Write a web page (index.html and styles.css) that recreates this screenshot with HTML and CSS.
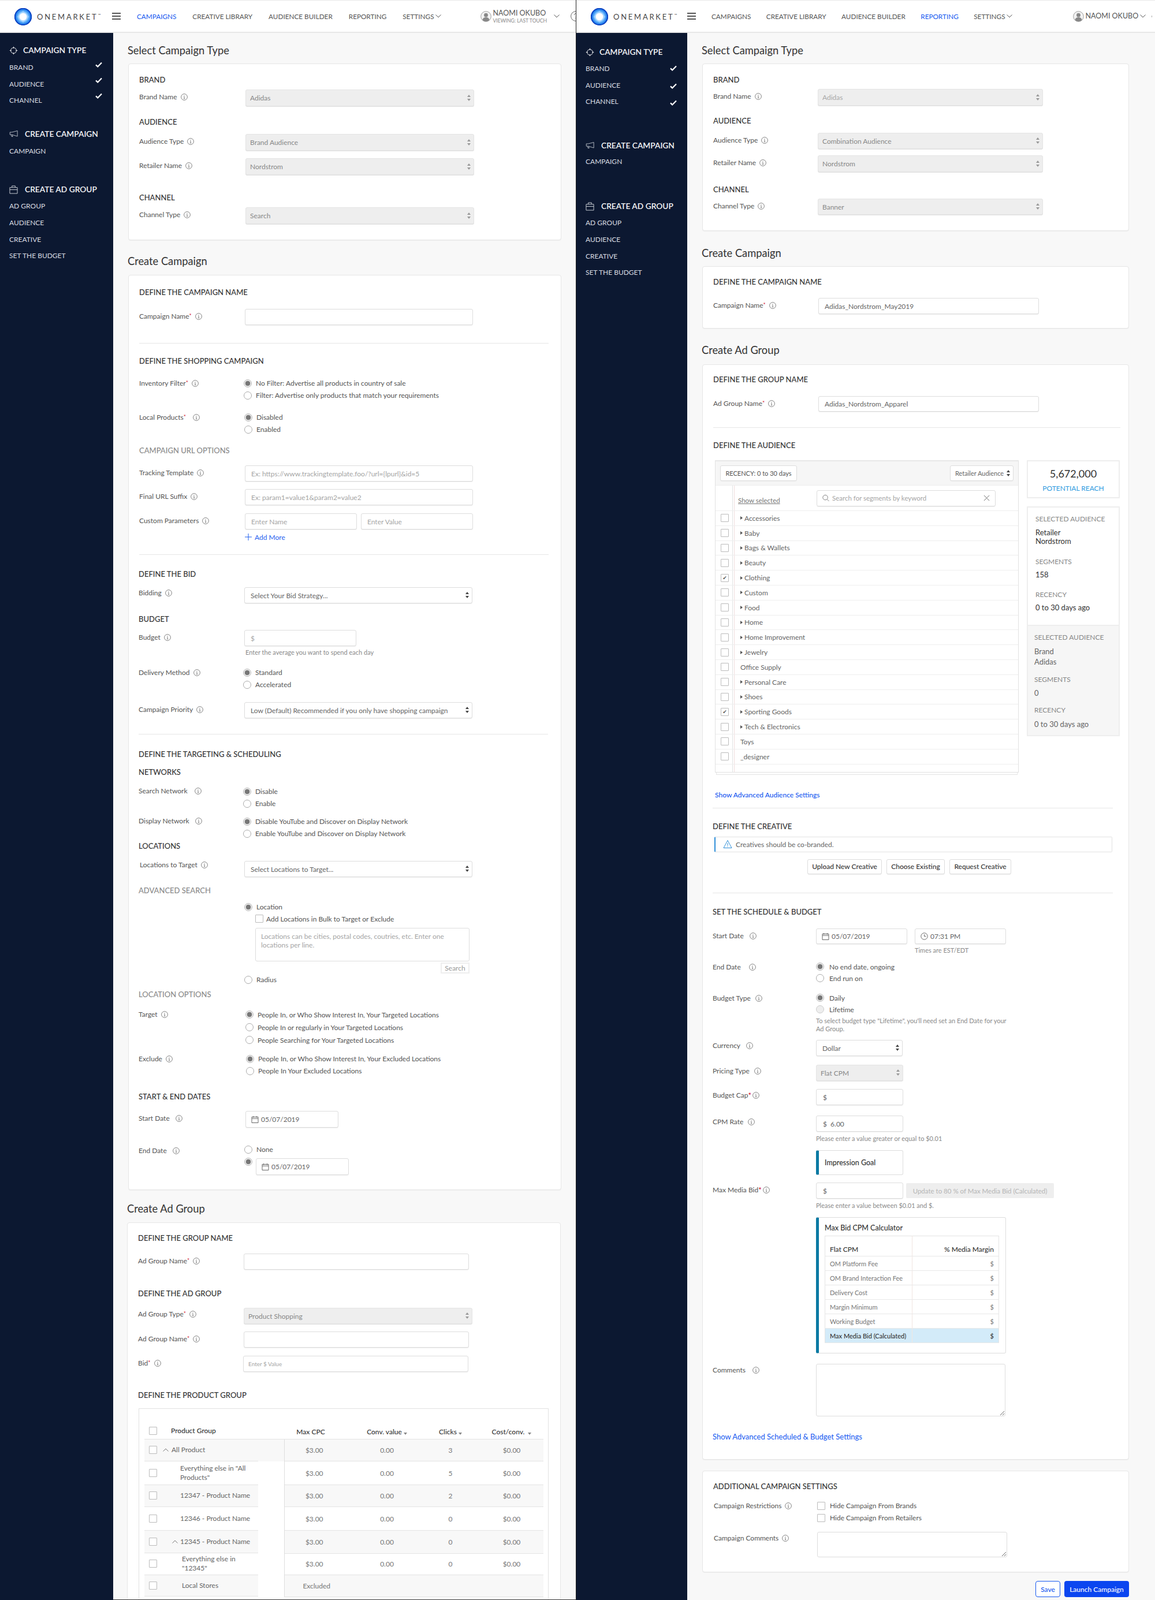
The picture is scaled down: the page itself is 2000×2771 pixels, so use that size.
FILE: index.html
```html
<!DOCTYPE html>
<html lang="en">
<head>
<meta charset="utf-8">
<title>OneMarket - Create Campaign</title>
<link rel="stylesheet" href="styles.css">
</head>
<body>
<svg class="sprite" xmlns="http://www.w3.org/2000/svg">
  <defs>
    <radialGradient id="lg" cx="50%" cy="50%" r="50%">
      <stop offset="0" stop-color="#fff"/><stop offset=".38" stop-color="#eaf6ff"/><stop offset=".6" stop-color="#6ab8fc"/><stop offset=".85" stop-color="#1f7cec"/><stop offset="1" stop-color="#0b3fc0"/>
    </radialGradient>
  </defs>
  <symbol id="logo" viewBox="0 0 30 30"><circle cx="15" cy="15" r="15" fill="url(#lg)"/><circle cx="15" cy="15" r="14.2" fill="none" stroke="#0a3fc0" stroke-width="1.6"/><path d="M15 4.5 25.5 15 15 25.5 4.5 15Z" fill="#a8d6ff" opacity=".6"/><circle cx="15" cy="15" r="6.2" fill="#fff"/></symbol>
  <symbol id="i" viewBox="0 0 12 12"><circle cx="6" cy="6" r="5.4" fill="none" stroke="#666" stroke-width=".8"/><path d="M5 5.2h1.1v3.4M4.8 8.7h2.5M6 3v1" fill="none" stroke="#666" stroke-width=".8"/></symbol>
  <symbol id="target" viewBox="0 0 16 16"><circle cx="8" cy="8" r="5.2" fill="none" stroke="#fff" stroke-width="1"/><path d="M8 .8v3.2M8 12v3.2M.8 8H4M12 8h3.2" stroke="#fff" stroke-width="1"/></symbol>
  <symbol id="mega" viewBox="0 0 18 14"><path d="M17 1 5.5 4H1.5v5h4L17 12.5ZM4 9.5l1 3.5h2.4l-1-3" fill="none" stroke="#cfd3da" stroke-width="1"/></symbol>
  <symbol id="brief" viewBox="0 0 16 16"><path d="M1 4h14v11H1ZM1 8h14M5 4V1h6v3" fill="none" stroke="#cfd3da" stroke-width="1"/></symbol>
  <symbol id="check" viewBox="0 0 12 10"><path d="M1 5.4 4.2 8.4 11 1.5" fill="none" stroke="#fff" stroke-width="2.2"/></symbol>
  <symbol id="user" viewBox="0 0 20 20"><circle cx="10" cy="10" r="9.3" fill="#f2f2f2" stroke="#999" stroke-width="1"/><circle cx="10" cy="7.5" r="3.6" fill="#888"/><path d="M3.6 16.5c.6-3.6 3.4-5 6.4-5s5.8 1.4 6.4 5a9 9 0 0 1-12.8 0Z" fill="#888"/></symbol>
  <symbol id="chev" viewBox="0 0 10 6"><path d="M.5.5 5 5 9.5.5" fill="none" stroke="#555" stroke-width="1"/></symbol>
  <symbol id="helpc" viewBox="0 0 18 18"><circle cx="9" cy="9" r="8.4" fill="none" stroke="#666" stroke-width="1"/><path d="M6.4 7c0-1.6 1.2-2.5 2.6-2.5S11.6 5.4 11.6 7c0 2-2.6 2.2-2.6 4.2M9 12.6v1.2" fill="none" stroke="#666" stroke-width="1"/></symbol>
  <symbol id="cal" viewBox="0 0 13 13"><path d="M1 2.5h11v10H1ZM1 5.2h11M3.6 1v2.6M9.4 1v2.6" fill="none" stroke="#666" stroke-width="1"/></symbol>
  <symbol id="clock" viewBox="0 0 13 13"><circle cx="6.5" cy="6.5" r="5.7" fill="none" stroke="#666" stroke-width="1"/><path d="M6.5 3.2v3.5h3" fill="none" stroke="#666" stroke-width="1"/></symbol>
  <symbol id="warn" viewBox="0 0 16 16"><path d="M8 1.5 15 14.5H1ZM8 6v4.6M8 11.6v1.2" fill="none" stroke="#2f8fd8" stroke-width="1"/></symbol>
  <symbol id="search" viewBox="0 0 13 13"><circle cx="5.5" cy="5.5" r="4.6" fill="none" stroke="#777" stroke-width="1"/><path d="M9 9l3.4 3.4" stroke="#777" stroke-width="1"/></symbol>
  <symbol id="x" viewBox="0 0 12 12"><path d="M1 1l10 10M11 1 1 11" stroke="#666" stroke-width="1"/></symbol>
  <symbol id="plus" viewBox="0 0 12 12"><path d="M6 0v12M0 6h12" stroke="#1f5fef" stroke-width="1"/></symbol>
  <symbol id="up" viewBox="0 0 10 6"><path d="M.5 5.5 5 1l4.5 4.5" fill="none" stroke="#777" stroke-width="1"/></symbol>
</svg>

<div class="page">

<!-- LEFT SCREEN -->
<section class="screen s-l">
  <header class="hdr">
    <svg class="logo"><use href="#logo"/></svg>
    <div class="brand">ONEMARKET<sup>™</sup></div>
    <div class="burger"><i></i><i></i><i></i></div>
    <nav class="nav">
      <a class="on">CAMPAIGNS</a><a>CREATIVE LIBRARY</a><a>AUDIENCE BUILDER</a><a>REPORTING</a><a class="chevd">SETTINGS<svg class="chev"><use href="#chev"/></svg></a>
    </nav>
    <div class="user">
      <svg class="ava"><use href="#user"/></svg>
      <div class="who"><div class="nm">NAOMI OKUBO</div><div class="vw">VIEWING: LAST TOUCH</div></div>
      <svg class="chev"><use href="#chev"/></svg>
      <svg class="help"><use href="#helpc"/></svg>
    </div>
  </header>
  <div class="body">
    <aside class="side">
      <div class="st m20"><svg class="ic"><use href="#target"/></svg>CAMPAIGN TYPE</div>
      <div class="si m6">BRAND<svg class="ck ck-5"><use href="#check"/></svg></div>
      <div class="si">AUDIENCE<svg class="ck ck-7"><use href="#check"/></svg></div>
      <div class="si">CHANNEL<svg class="ck ck-8"><use href="#check"/></svg></div>
      <div class="st m33"><svg class="ic ic2"><use href="#mega"/></svg>CREATE CAMPAIGN</div>
      <div class="si m6">CAMPAIGN</div>
      <div class="st m42"><svg class="ic ic2"><use href="#brief"/></svg>CREATE AD GROUP</div>
      <div class="si m5">AD GROUP</div>
      <div class="si">AUDIENCE</div>
      <div class="si">CREATIVE</div>
      <div class="si">SET THE BUDGET</div>
    </aside>
    <main class="main">
      <h2 class="h2 m18">Select Campaign Type</h2>
      <div class="card pb27">
        <div class="sec m19">BRAND</div>
        <div class="row col184 m9"><label class="lbl">Brand Name<svg class="i"><use href="#i"/></svg></label><div class="sel dis w396 h29"><select disabled><option>Adidas</option></select></div></div>
        <div class="sec m19">AUDIENCE</div>
        <div class="row col184 m13"><label class="lbl">Audience Type<svg class="i"><use href="#i"/></svg></label><div class="sel dis w396 h29"><select disabled><option>Brand Audience</option></select></div></div>
        <div class="row col184 m13"><label class="lbl">Retailer Name<svg class="i"><use href="#i"/></svg></label><div class="sel dis w396 h29"><select disabled><option>Nordstrom</option></select></div></div>
        <div class="sec m31">CHANNEL</div>
        <div class="row col184 m9"><label class="lbl">Channel Type<svg class="i"><use href="#i"/></svg></label><div class="sel dis w396 h29"><select disabled><option>Search</option></select></div></div>
      </div>

      <h2 class="h2 m24 hb12">Create Campaign</h2>
      <div class="card pb25">
        <div class="sec m21">DEFINE THE CAMPAIGN NAME</div>
        <div class="row m21"><label class="lbl">Campaign Name<b>*</b><svg class="i"><use href="#i"/></svg></label><input class="inp w395"></div>
        <hr class="div m31">
        <div class="sec m22">DEFINE THE SHOPPING CAMPAIGN</div>
        <div class="row m20"><label class="lbl lt">Inventory Filter<b>*</b><svg class="i"><use href="#i"/></svg></label>
          <div class="radios n2"><label class="radio"><input type="radio" name="a1" checked>No Filter: Advertise all products in country of sale</label><label class="radio"><input type="radio" name="a1">Filter: Advertise only products that match your requirements</label></div></div>
        <div class="row m17"><label class="lbl lt">Local Products<b>*</b><svg class="i g12"><use href="#i"/></svg></label>
          <div class="radios n1"><label class="radio"><input type="radio" name="a2" checked>Disabled</label><label class="radio"><input type="radio" name="a2">Enabled</label></div></div>
        <div class="sec gray m18">CAMPAIGN URL OPTIONS</div>
        <div class="row m18"><label class="lbl">Tracking Template<svg class="i"><use href="#i"/></svg></label><input class="inp w395" placeholder="Ex: https://www.trackingtemplate.foo/?url={lpurl}&amp;id=5"></div>
        <div class="row m13"><label class="lbl">Final URL Suffix<svg class="i"><use href="#i"/></svg></label><input class="inp w395" placeholder="Ex: param1=value1&amp;param2=value2"></div>
        <div class="row m14"><label class="lbl">Custom Parameters<svg class="i"><use href="#i"/></svg></label><div class="pair"><input class="inp w194" placeholder="Enter Name"><input class="inp w194" placeholder="Enter Value"></div></div>
        <div class="row m5"><span></span><a class="more"><svg class="plus"><use href="#plus"/></svg>Add More</a></div>
        <hr class="div m22">
        <div class="nudge">
          <div class="sec m25">DEFINE THE BID</div>
          <div class="row m15"><label class="lbl l0">Bidding<svg class="i"><use href="#i"/></svg></label><div class="sel w395"><select><option>Select Your Bid Strategy...</option></select></div></div>
          <div class="sec m19">BUDGET</div>
          <div class="row m11"><label class="lbl">Budget<svg class="i"><use href="#i"/></svg></label><div><input class="inp w194" placeholder="$"><div class="hint m3">Enter the average you want to spend each day</div></div></div>
          <div class="row m16"><label class="lbl lt">Delivery Method<svg class="i"><use href="#i"/></svg></label>
            <div class="radios n2"><label class="radio"><input type="radio" name="a3" checked>Standard</label><label class="radio"><input type="radio" name="a3">Accelerated</label></div></div>
          <div class="row m20"><label class="lbl">Campaign Priority<svg class="i"><use href="#i"/></svg></label><div class="sel w395"><select><option>Low (Default) Recommended if you only have shopping campaign</option></select></div></div>
          <hr class="div m27">
          <div class="sec m26">DEFINE THE TARGETING &amp; SCHEDULING</div>
          <div class="sec m15">NETWORKS</div>
          <div class="row m15"><label class="lbl l0">Search Network<svg class="i g12"><use href="#i"/></svg></label>
            <div class="radios n2"><label class="radio"><input type="radio" name="a4" checked>Disable</label><label class="radio"><input type="radio" name="a4">Enable</label></div></div>
          <div class="row m10"><label class="lbl l0">Display Network<svg class="i g10"><use href="#i"/></svg></label>
            <div class="radios n2"><label class="radio"><input type="radio" name="a5" checked>Disable YouTube and Discover on Display Network</label><label class="radio"><input type="radio" name="a5">Enable YouTube and Discover on Display Network</label></div></div>
          <div class="sec m3">LOCATIONS</div>
          <div class="row m18"><label class="lbl lup">Locations to Target<svg class="i"><use href="#i"/></svg></label><div class="sel w395"><select><option>Select Locations to Target...</option></select></div></div>
          <div class="sec gray m15">ADVANCED SEARCH</div>
          <div class="row m10"><span></span>
            <div>
              <label class="radio"><input type="radio" name="a6" checked>Location</label>
              <label class="bulk"><input class="cb" type="checkbox">Add Locations in Bulk to Target or Exclude</label>
              <textarea class="ta bulk-ta" placeholder="Locations can be cities, postal codes, coutries, etc. Enter one locations per line."></textarea>
              <div class="srow"><button class="mini">Search</button></div>
              <label class="radio"><input type="radio" name="a6">Radius</label>
            </div></div>
          <div class="sec gray m7">LOCATION OPTIONS</div>
          <div class="row m16"><label class="lbl lt">Target<svg class="i"><use href="#i"/></svg></label>
            <div class="radios p2 r22"><label class="radio"><input type="radio" name="a7" checked>People In, or Who Show Interest In, Your Targeted Locations</label><label class="radio"><input type="radio" name="a7">People In or regularly in Your Targeted Locations</label><label class="radio"><input type="radio" name="a7">People Searching for Your Targeted Locations</label></div></div>
          <div class="row m11"><label class="lbl lt">Exclude<svg class="i"><use href="#i"/></svg></label>
            <div class="radios p3"><label class="radio"><input type="radio" name="a8" checked>People In, or Who Show Interest In, Your Excluded Locations</label><label class="radio"><input type="radio" name="a8">People In Your Excluded Locations</label></div></div>
          <div class="sec m26">START &amp; END DATES</div>
          <div class="row m17"><label class="lbl">Start Date<svg class="i g10"><use href="#i"/></svg></label><div class="field w161 p2"><svg class="fi"><use href="#cal"/></svg>05/07/2019</div></div>
          <div class="row m27"><label class="lbl">End Date<svg class="i g10"><use href="#i"/></svg></label>
            <div>
              <label class="radio"><input type="radio" name="a9">None</label>
              <div class="endrow m5"><input type="radio" name="a9" checked><div class="field w161"><svg class="fi"><use href="#cal"/></svg>05/07/2019</div></div>
            </div></div>
        </div>
      </div>

      <h2 class="h2 m20 hb12 c3x">Create Ad Group</h2>
      <div class="card c3x c3">
        <div class="sec m18">DEFINE THE GROUP NAME</div>
        <div class="row m19"><label class="lbl">Ad Group Name<b>*</b><svg class="i"><use href="#i"/></svg></label><input class="inp w390"></div>
        <div class="sec m33">DEFINE THE AD GROUP</div>
        <div class="row m17"><label class="lbl l1">Ad Group Type<b>*</b><svg class="i"><use href="#i"/></svg></label><div class="sel dis w396"><select disabled><option>Product Shopping</option></select></div></div>
        <div class="row m13"><label class="lbl">Ad Group Name <b>*</b><svg class="i"><use href="#i"/></svg></label><input class="inp w390"></div>
        <div class="row m14"><label class="lbl">Bid <b>*</b><svg class="i"><use href="#i"/></svg></label><input class="inp w390 tiny" placeholder="Enter $ Value"></div>
        <div class="sec m32">DEFINE THE PRODUCT GROUP</div>
        <div class="tbox m15">
          <table class="pg">
            <colgroup><col class="c1"><col class="c2"><col class="c3c"><col class="c4"><col class="c5"></colgroup>
            <thead><tr>
              <th class="nmh"><div class="pgn"><input class="cb" type="checkbox"><span class="in1">Product Group</span></div></th>
              <th class="thc2">Max CPC</th>
              <th>Conv. value<i class="dn"></i></th>
              <th>Clicks<i class="dn"></i></th>
              <th class="pl15">Cost/conv. <i class="dn"></i></th>
            </tr></thead>
            <tbody>
              <tr class="alt full h38"><td><div class="pgn"><input class="cb" type="checkbox"><svg class="upc"><use href="#up"/></svg><span class="in0">All Product</span></div></td><td>$3.00</td><td>0.00</td><td>3</td><td class="pl15">$0.00</td></tr>
              <tr class="h41"><td><div class="pgn"><input class="cb" type="checkbox"><span class="in2">Everything else in "All Products"</span></div></td><td>$3.00</td><td>0.00</td><td>5</td><td class="pl15">$0.00</td></tr>
              <tr class="alt h38"><td><div class="pgn"><input class="cb" type="checkbox"><span class="in2">12347 - Product Name</span></div></td><td>$3.00</td><td>0.00</td><td>2</td><td class="pl15">$0.00</td></tr>
              <tr class="h41"><td><div class="pgn"><input class="cb" type="checkbox"><span class="in2">12346 - Product Name</span></div></td><td>$3.00</td><td>0.00</td><td>0</td><td class="pl15">$0.00</td></tr>
              <tr class="alt h40"><td><div class="pgn"><input class="cb" type="checkbox"><svg class="upc up2"><use href="#up"/></svg><span class="in0">12345 - Product Name</span></div></td><td>$3.00</td><td>0.00</td><td>0</td><td class="pl15">$0.00</td></tr>
              <tr class="h37"><td><div class="pgn"><input class="cb" type="checkbox"><span class="in3">Everything else in "12345"</span></div></td><td>$3.00</td><td>0.00</td><td>0</td><td class="pl15">$0.00</td></tr>
              <tr class="alt h37"><td><div class="pgn"><input class="cb" type="checkbox"><span class="in3">Local Stores</span></div></td><td class="excl">Excluded</td><td></td><td></td><td class="pl15"></td></tr>
            </tbody>
          </table>
        </div>
      </div>
    </main>
  </div>
</section>

<!-- RIGHT SCREEN -->
<section class="screen s-r">
  <header class="hdr">
    <svg class="logo"><use href="#logo"/></svg>
    <div class="brand">ONEMARKET<sup>™</sup></div>
    <div class="burger"><i></i><i></i><i></i></div>
    <nav class="nav">
      <a>CAMPAIGNS</a><a>CREATIVE LIBRARY</a><a>AUDIENCE BUILDER</a><a class="on">REPORTING</a><a class="chevd">SETTINGS<svg class="chev"><use href="#chev"/></svg></a>
    </nav>
    <div class="user">
      <svg class="ava"><use href="#user"/></svg>
      <div class="who"><div class="nm">NAOMI OKUBO</div></div>
      <svg class="chev"><use href="#chev"/></svg>
      <div class="tick"></div>
    </div>
  </header>
  <div class="body">
    <aside class="side">
      <div class="st m23"><svg class="ic"><use href="#target"/></svg>CAMPAIGN TYPE</div>
      <div class="si m5">BRAND<svg class="ck ck-1"><use href="#check"/></svg></div>
      <div class="si">AUDIENCE<svg class="ck ck1"><use href="#check"/></svg></div>
      <div class="si">CHANNEL<svg class="ck ck2"><use href="#check"/></svg></div>
      <div class="st m51"><svg class="ic ic2"><use href="#mega"/></svg>CREATE CAMPAIGN</div>
      <div class="si m4">CAMPAIGN</div>
      <div class="st m53"><svg class="ic ic2"><use href="#brief"/></svg>CREATE AD GROUP</div>
      <div class="si m5">AD GROUP</div>
      <div class="si">AUDIENCE</div>
      <div class="si">CREATIVE</div>
      <div class="si">SET THE BUDGET</div>
    </aside>
    <main class="main">
      <h2 class="h2 m18">Select Campaign Type</h2>
      <div class="card pb27">
        <div class="sec m19">BRAND</div>
        <div class="row col181 m8"><label class="lbl">Brand Name<svg class="i"><use href="#i"/></svg></label><div class="sel dis w390 h29"><select disabled class="lite"><option>Adidas</option></select></div></div>
        <div class="sec m18">AUDIENCE</div>
        <div class="row col181 m13"><label class="lbl">Audience Type<svg class="i"><use href="#i"/></svg></label><div class="sel dis w390"><select disabled><option>Combination Audience</option></select></div></div>
        <div class="row col181 m11"><label class="lbl">Retailer Name<svg class="i"><use href="#i"/></svg></label><div class="sel dis w390 h29"><select disabled><option>Nordstrom</option></select></div></div>
        <div class="sec m22">CHANNEL</div>
        <div class="row col181 m8"><label class="lbl">Channel Type<svg class="i"><use href="#i"/></svg></label><div class="sel dis w390"><select disabled><option>Banner</option></select></div></div>
      </div>

      <h2 class="h2 m26">Create Campaign</h2>
      <div class="card pb24">
        <div class="sec m18">DEFINE THE CAMPAIGN NAME</div>
        <div class="row col182 m20"><label class="lbl">Campaign Name<b>*</b><svg class="i"><use href="#i"/></svg></label><input class="inp w382" value="Adidas_Nordstrom_May2019"></div>
      </div>

      <h2 class="h2 m25 hb13">Create Ad Group</h2>
      <div class="card pb30">
        <div class="sec m17">DEFINE THE GROUP NAME</div>
        <div class="row col182 m21"><label class="lbl">Ad Group Name<b>*</b><svg class="i"><use href="#i"/></svg></label><input class="inp w382 h27" value="Adidas_Nordstrom_Apparel"></div>
        <hr class="div dr m27">
        <div class="sec m22">DEFINE THE AUDIENCE</div>
        <div class="aud m18">
          <div class="aud-l">
            <div class="aud-box">
              <div class="aud-top">
                <button class="rec">RECENCY: 0 to 30 days</button>
                <div class="sel mini-sel"><select><option>Retailer Audience</option></select></div>
              </div>
              <div class="aud-search">
                <div class="lc"></div>
                <div class="nc"><a class="showsel">Show selected</a>
                  <div class="sbox"><svg class="si-s"><use href="#search"/></svg><span class="ph">Search for segments by keyword</span><svg class="si-x"><use href="#x"/></svg></div></div>
              </div>
              <div class="li"><div class="lc"><input class="cb" type="checkbox"></div><div class="nc"><i class="tri"></i>Accessories</div></div>
              <div class="li"><div class="lc"><input class="cb" type="checkbox"></div><div class="nc"><i class="tri"></i>Baby</div></div>
              <div class="li"><div class="lc"><input class="cb" type="checkbox"></div><div class="nc"><i class="tri"></i>Bags &amp; Wallets</div></div>
              <div class="li"><div class="lc"><input class="cb" type="checkbox"></div><div class="nc"><i class="tri"></i>Beauty</div></div>
              <div class="li"><div class="lc"><input class="cb" type="checkbox" checked></div><div class="nc"><i class="tri"></i>Clothing</div></div>
              <div class="li"><div class="lc"><input class="cb" type="checkbox"></div><div class="nc"><i class="tri"></i>Custom</div></div>
              <div class="li"><div class="lc"><input class="cb" type="checkbox"></div><div class="nc"><i class="tri"></i>Food</div></div>
              <div class="li"><div class="lc"><input class="cb" type="checkbox"></div><div class="nc"><i class="tri"></i>Home</div></div>
              <div class="li"><div class="lc"><input class="cb" type="checkbox"></div><div class="nc"><i class="tri"></i>Home Improvement</div></div>
              <div class="li"><div class="lc"><input class="cb" type="checkbox"></div><div class="nc"><i class="tri"></i>Jewelry</div></div>
              <div class="li"><div class="lc"><input class="cb" type="checkbox"></div><div class="nc">Office Supply</div></div>
              <div class="li"><div class="lc"><input class="cb" type="checkbox"></div><div class="nc"><i class="tri"></i>Personal Care</div></div>
              <div class="li"><div class="lc"><input class="cb" type="checkbox"></div><div class="nc"><i class="tri"></i>Shoes</div></div>
              <div class="li"><div class="lc"><input class="cb" type="checkbox" checked></div><div class="nc"><i class="tri"></i>Sporting Goods</div></div>
              <div class="li"><div class="lc"><input class="cb" type="checkbox"></div><div class="nc"><i class="tri"></i>Tech &amp; Electronics</div></div>
              <div class="li"><div class="lc"><input class="cb" type="checkbox"></div><div class="nc">Toys</div></div>
              <div class="li"><div class="lc"><input class="cb" type="checkbox"></div><div class="nc">_designer</div></div>
              <div class="li tail"><div class="lc"></div><div class="nc"></div></div>
            </div>
            <div class="aud-under"></div>
          </div>
          <div class="aud-r">
            <div class="reach"><div class="rn">5,672,000</div><div class="rl">POTENTIAL REACH</div></div>
            <div class="selbox">
              <div class="sb-a">
                <div class="k">SELECTED AUDIENCE</div>
                <div class="v strong m8">Retailer</div><div class="v strong">Nordstrom</div>
                <div class="k m20">SEGMENTS</div>
                <div class="v strong m7">158</div>
                <div class="k m19">RECENCY</div>
                <div class="v strong m7">0 to 30 days ago</div>
              </div>
              <div class="sb-b">
                <div class="k">SELECTED AUDIENCE</div>
                <div class="v tall m7">Brand</div><div class="v tall">Adidas</div>
                <div class="k m14">SEGMENTS</div>
                <div class="v m7">0</div>
                <div class="k m14">RECENCY</div>
                <div class="v m8">0 to 30 days ago</div>
              </div>
            </div>
          </div>
        </div>
        <a class="adv b m27">Show Advanced Audience Settings</a>
        <div class="nudge">
          <hr class="div dr2 m14">
          <div class="sec m23">DEFINE THE CREATIVE</div>
          <div class="alert m10"><svg class="warn"><use href="#warn"/></svg>Creatives should be co-branded.</div>
          <div class="btns m12"><button class="btn b129">Upload New Creative</button><button class="btn b101">Choose Existing</button><button class="btn b107">Request Creative</button></div>
          <hr class="div dr2 m32">
          <div class="sec m24">SET THE SCHEDULE &amp; BUDGET</div>
          <div class="row col179 m21"><label class="lbl">Start Date<svg class="i g10"><use href="#i"/></svg></label>
            <div><div class="pair g13"><div class="field w158"><svg class="fi"><use href="#cal"/></svg>05/07/2019</div><div class="field w158"><svg class="fi"><use href="#clock"/></svg>07:31 PM</div></div><div class="hint hi171 m3">Times are EST/EDT</div></div></div>
          <div class="row col179 m10"><label class="lbl lt">End Date<svg class="i g14"><use href="#i"/></svg></label>
            <div class="radios r20"><label class="radio"><input type="radio" name="b1" checked>No end date, ongoing</label><label class="radio"><input type="radio" name="b1">End run on</label></div></div>
          <div class="row col179 m14"><label class="lbl lt">Budget Type<svg class="i g8"><use href="#i"/></svg></label>
            <div><div class="radios r20"><label class="radio"><input type="radio" name="b2" checked>Daily</label><label class="radio"><input type="radio" name="b2" disabled class="off">Lifetime</label></div><div class="hint note m3">To select budget type "Lifetime", you'll need set an End Date for your Ad Group.</div></div></div>
          <div class="row col179 m13"><label class="lbl l0">Currency<svg class="i g10"><use href="#i"/></svg></label><div class="sel w150"><select><option>Dollar</option></select></div></div>
          <div class="row col179 m15"><label class="lbl lt">Pricing Type<svg class="i g8"><use href="#i"/></svg></label><div class="sel dis w151"><select disabled><option>Flat CPM</option></select></div></div>
          <div class="row col179 m14"><label class="lbl lt">Budget Cap<b class="big">*</b><svg class="i g2"><use href="#i"/></svg></label><div class="field w151 ds">$</div></div>
          <div class="row col179 m18"><label class="lbl lt">CPM Rate<svg class="i g8"><use href="#i"/></svg></label>
            <div><div class="field w151 ds">$&nbsp; 6.00</div><div class="hint m4">Please enter a value greater or equal to $0.01</div><div class="goal m12">Impression Goal</div></div></div>
          <div class="row col179 m13"><label class="lbl">Max Media Bid<b class="big">*</b><svg class="i g2"><use href="#i"/></svg></label>
            <div><div class="pair g5"><div class="field w151 ds">$</div><button class="upd">Update to 80 % of Max Media Bid (Calculated)</button></div>
              <div class="hint m4">Please enter a value between $0.01 and $.</div>
              <div class="calc m12"><div class="ct">Max Bid CPM Calculator</div>
                <div class="ctw"><table class="ctb">
                  <thead><tr><th>Flat CPM</th><th class="tr">% Media Margin</th></tr></thead>
                  <tbody>
                    <tr><td>OM Platform Fee</td><td class="tr">$</td></tr>
                    <tr><td>OM Brand Interaction Fee</td><td class="tr">$</td></tr>
                    <tr><td>Delivery Cost</td><td class="tr">$</td></tr>
                    <tr><td>Margin Minimum</td><td class="tr">$</td></tr>
                    <tr><td>Working Budget</td><td class="tr">$</td></tr>
                    <tr class="hl"><td>Max Media Bid (Calculated)</td><td class="tr">$</td></tr>
                  </tbody>
                </table></div>
              </div>
            </div></div>
          <div class="row col179 m18"><label class="lbl lt">Comments<svg class="i g12"><use href="#i"/></svg></label><textarea class="ta w328 h91"></textarea></div>
          <a class="adv m27">Show Advanced Scheduled &amp; Budget Settings</a>
        </div>
      </div>

      <div class="card pb25 m19">
        <div class="sec m18">ADDITIONAL CAMPAIGN SETTINGS</div>
        <div class="row col179 m15 rst"><label class="lbl lt">Campaign Restrictions<svg class="i"><use href="#i"/></svg></label>
          <div class="checks"><label class="chk"><input class="cb" type="checkbox">Hide Campaign From Brands</label><label class="chk"><input class="cb" type="checkbox">Hide Campaign From Retailers</label></div></div>
        <div class="row col179 m14 rst"><label class="lbl lt">Campaign Comments<svg class="i"><use href="#i"/></svg></label><textarea class="ta w329 h44"></textarea></div>
      </div>
      <div class="foot m15"><button class="save">Save</button><button class="launch">Launch Campaign</button></div>
    </main>
  </div>
</section>
</div>
</body>
</html>
```

FILE: styles.css
```css
*{box-sizing:border-box}
html,body{margin:0;padding:0;height:2771px;overflow:hidden;background:#f8f8f8}
body{font-family:"Lato","Noto Sans",sans-serif;font-size:12px;color:#555}
.sprite{width:0;height:0;position:absolute}
.page{display:flex;height:2771px;width:2000px}
.screen{height:2771px;display:flex;flex-direction:column;overflow:hidden}
.s-l{width:998px;border-right:1px solid #222}
.s-r{width:1002px}

/* header */
.hdr{height:57px;flex:none;background:#fff;border-top:1px solid #e8e8e8;border-bottom:2px solid #e8e8e8;display:flex;align-items:center;overflow:hidden;padding-left:25px}
.logo{width:30px;height:30px;flex:none;margin-top:2px}
.brand{font-size:13px;letter-spacing:2.75px;color:#444;margin-left:9px;width:130px;flex:none;margin-top:2px;white-space:nowrap}
.brand sup{font-size:6px;letter-spacing:0;vertical-align:6px;line-height:0}
.burger{width:15px;flex:none;display:flex;flex-direction:column;gap:3px}
.burger i{display:block;height:2px;background:#555}
.nav{display:flex;gap:27px;font-size:11.75px;color:#555;margin-left:27px;white-space:nowrap}
.nav a{display:flex;align-items:center}
.nav .on{color:#1558f0}
.chevd .chev{margin-left:2px}
.chev{width:10px;height:6px;flex:none}
.s-l .nav{margin-left:28px;gap:28px}
.s-r .brand{width:128px}
.s-r .nav{margin-left:27px;gap:26.5px}
.user{margin-left:auto;display:flex;align-items:center;flex:none}
.s-l .user{margin-left:68px}
.s-r .user{margin-left:105px}
.ava{width:19px;height:19px;flex:none}
.who{margin-left:3px;color:#555;white-space:nowrap}
.nm{font-size:12.5px;line-height:14px}
.s-l .who{margin-top:3px}
.vw{font-size:8.6px;line-height:13px;color:#888}
.user .chev{margin-left:12px}
.s-r .user .chev{margin-left:3px}
.help{width:18px;height:18px;margin-left:19px;flex:none}
.tick{width:1px;height:3px;background:#aaa;margin-left:10px}

/* body */
.body{flex:1;display:flex;min-height:0}
.side{background:#0c1831;flex:none;color:#e6e8ec;display:flex;flex-direction:column}
.s-l .side{width:196px}
.s-r .side{width:192px}
.st{height:20px;line-height:20px;font-size:13.75px;font-weight:600;color:#f4f5f7;display:flex;align-items:center;padding-left:16px;white-space:nowrap}
.ic{width:15px;height:15px;margin-right:9px;flex:none}
.ic2{margin-right:12px}
.si{height:28.6px;line-height:28.6px;font-size:12px;padding-left:16px;display:flex;justify-content:space-between;align-items:center;color:#d9dce2;padding-right:19px}
.s-r .si{padding-right:18px}
.ck{width:12px;height:10px;flex:none}
.ck-5{transform:translateY(-5px)}
.ck-7{transform:translateY(-7px)}
.ck-8{transform:translateY(-8px)}
.ck-1{transform:translateY(-1px)}
.ck1{transform:translateY(1px)}
.ck2{transform:translateY(2px)}

.main{flex:1;min-width:0;background:#f8f8f8;overflow:hidden}
.s-l .main{padding:0 25px 0 26px;border-bottom:1px solid #333}
.s-r .main{padding:0 45px 0 26px}
.h2{margin:0 0 11px;font-size:18.3px;line-height:24px;font-weight:400;color:#333}
.s-l .h2{margin-left:-1px}
.s-r .h2{margin-left:-1px}
.hb12{margin-bottom:12px}
.hb13{margin-bottom:13px}
.card{background:#fff;border:1px solid #e6e6e6;border-radius:4px;padding:0 21px 0 18px;box-shadow:0 1px 0 #efefef}
.s-l .card{width:750px}
.s-r .card{width:739px}
.card::before{content:"";display:table}
.s-l .card.c3x{margin-left:-2px}
.s-l .h2.c3x{margin-left:-2px}
.s-l .card.c3{width:751px;height:700px}
.pb24{padding-bottom:24px}.pb25{padding-bottom:25px}.pb27{padding-bottom:27px}.pb30{padding-bottom:31px}
.sec{height:16px;line-height:16px;font-size:13px;font-weight:500;color:#333;white-space:nowrap}
.sec.gray{color:#8a8a8a}
.nudge{margin-left:-1px}
.div{border:0;border-top:1px solid #e6e6e6;height:1px;margin:0;width:709px}
.div.dr{width:705px}
.div.dr2{width:693px}

.row{display:grid;grid-template-columns:183px 1fr;align-items:start}
.col184{grid-template-columns:184px 1fr}
.col182{grid-template-columns:182px 1fr}
.col181{grid-template-columns:181px 1fr}
.col179{grid-template-columns:179px 1fr}
.lbl{display:flex;align-items:center;font-size:12px;line-height:20px;padding-top:3px;color:#555;white-space:nowrap}
.lbl b{color:#d0021b;font-weight:400;font-size:10px;align-self:flex-start;line-height:16px}
.lbl b.big{font-size:13px;line-height:20px}
.lt{padding-top:1px}
.l0{padding-top:0}
.l1{padding-top:1px}
.lup{margin-top:-3px;padding-top:0;padding-left:2px}
.i{width:12px;height:12px;margin-left:6px;flex:none}
.g2{margin-left:2px}.g8{margin-left:8px}.g10{margin-left:10px}.g12{margin-left:12px}.g14{margin-left:14px}

.inp{display:block;height:28px;border:1px solid #ddd;border-radius:3px;box-shadow:0 1px 0 #eee;background:#fff;font:12px "Lato",sans-serif;color:#666;padding:0 10px;outline:0}
.inp::placeholder{color:#a5a5a5;opacity:1}
.inp.tiny{font-size:10px;padding:0 8px;margin-left:-1px}
.inp.h27{height:27px}
.w396{width:396px}.w395{width:395px}.w390{width:390px}.w382{width:382px}.w194{width:194px}.w161{width:161px}.w158{width:158px}.w151{width:151px}.w150{width:150px}
.pair{display:flex;gap:7px}
.pair.g13{gap:13px}
.pair.g5{gap:5px}
.sel{position:relative;height:28px;background:#fff;border:1px solid #ddd;border-radius:3px;box-shadow:0 1px 0 #eee}
.sel.h29{height:29px}
.sel select{appearance:none;-webkit-appearance:none;border:0;background:transparent;width:100%;height:100%;padding:0 10px;font:12px "Lato",sans-serif;color:#666;outline:0;opacity:1}
.sel.dis{background:#eee;border-color:#e4e4e4;box-shadow:0 1px 0 #e2e2e2}
.sel.dis select{color:#888;padding-left:7px}
.sel select.lite{color:#a8a8a8}
.sel::before,.sel::after{content:"";position:absolute;right:5px;width:0;height:0;border-left:3px solid transparent;border-right:3px solid transparent}
.sel::before{top:calc(50% - 6px);border-bottom:4px solid #444}
.sel::after{top:calc(50% + 1px);border-top:4px solid #444}
.sel.dis::before{border-bottom-color:#999}
.sel.dis::after{border-top-color:#999}
.hint{font-size:11px;line-height:16px;color:#8a8a8a;white-space:nowrap}
.s-l .hint{padding-left:2px}
.hi171{margin-left:171px}
.note{white-space:normal;width:330px;line-height:13.5px;margin-top:3px}
.more{display:flex;align-items:center;height:16px;color:#1f5fef;font-size:12px}
.plus{width:12px;height:12px;margin-right:5px}

.radios{display:flex;flex-direction:column}
.radio{display:flex;align-items:center;height:21px;gap:7px;font-size:12px;color:#555;white-space:nowrap}
.s-r .radio{gap:9px}
.radio input,.endrow input{appearance:none;-webkit-appearance:none;width:14px;height:14px;margin:0;border:1px solid #aaa;border-radius:50%;background:#fff;flex:none}
.radio input:checked,.endrow input:checked{background:radial-gradient(circle,#777 0 4px,#e9e9e9 4.6px);border-color:#bbb}
.radio input.off{background:#eee;border-color:#ccc}
.n1{margin-left:-1px}.n2{margin-left:-2px}
.p2{margin-left:2px}.p3{margin-left:3px}
.r22 .radio{height:22px}
.r20 .radio{height:20px}
.bulk{display:flex;align-items:center;height:20px;margin-left:19px;gap:5px;font-size:12px;white-space:nowrap}
.cb{appearance:none;-webkit-appearance:none;width:14px;height:14px;margin:0;border:1px solid #bbb;border-radius:1px;background:#fff;flex:none;position:relative}
.cb:checked::after{content:"✔";position:absolute;inset:0;text-align:center;font:9px/12px "DejaVu Sans",sans-serif;color:#555}
.ta{display:block;border:1px solid #ddd;border-radius:3px;background:#fff;font:12px/15px "Lato",sans-serif;color:#666;padding:6px 9px;outline:0}
.ta::placeholder{color:#a5a5a5;opacity:1}
.bulk-ta{width:371px;height:58px;margin:6px 0 0 19px;resize:none}
.srow{display:flex;justify-content:flex-end;width:390px;margin-top:2px;height:19px}
.mini{height:19px;width:50px;padding:0;background:#fff;border:2px solid #eee;font:12px "Lato",sans-serif;color:#999}
.field{height:29px;border:1px solid #ddd;border-radius:3px;box-shadow:0 1px 0 #eee;background:#fff;display:flex;align-items:center;font-size:12px;color:#666;padding-left:9px;white-space:nowrap}
.field.ds{height:28px;padding-left:11px}
.s-r .field:not(.ds){height:27.5px}
.fi{width:13px;height:13px;margin-right:4px;flex:none}
.endrow{display:flex;gap:6px}
.endrow input{margin-top:-1px}

/* product table */
.tbox{width:710px;height:500px;border:1px solid #e2e2e2;margin-left:1px;padding-left:9px}
.pg{border-collapse:collapse;table-layout:fixed;width:691px;font-size:12px;color:#666}
.pg .c1{width:242px}.pg .c2{width:104px}.pg .c3c{width:148px}.pg .c4{width:72px}.pg .c5{width:125px}
.pg th{height:52px;vertical-align:bottom;padding:0 0 5px;font-weight:500;color:#333;text-align:center;border-bottom:1px solid #e4e4e4;white-space:nowrap}
.pg th.nmh{text-align:left;padding:0}
.pg .nmh .pgn{height:20px;border-bottom:0;margin-bottom:4px;background:transparent;width:240px}
.thc2{padding-right:12px !important}
.pl15{padding-left:15px !important}
.pg td{padding:0;text-align:center;border-bottom:1px solid #e4e4e4;color:#777}
.pg td:first-child{border-bottom:0;border-right:1px solid #ddd;text-align:left;vertical-align:top;background:#fff}
.h38 td{height:38px}.h41 td{height:41px}.h40 td{height:39.5px}.h37 td{height:37.5px}
.pg tbody tr.alt{background:#f8f8f8}
.pgn{display:flex;align-items:center;width:197px;height:100%;padding-left:8px;color:#666;line-height:16px;border-bottom:1px solid #e4e4e4}
.h38 .pgn{height:38px}.h41 .pgn{height:41px}.h40 .pgn{height:39.5px}.h37 .pgn{height:37.5px}
.alt .pgn{background:#f8f8f8}
.alt.full td:first-child{background:#f8f8f8}
.in0{margin-left:5px}
.in1{margin-left:24px;color:#333}
.in2{margin-left:40px;width:136px}
.in3{margin-left:43px;width:110px}
.upc{width:10px;height:6px;margin-left:10px;flex:none}
.up2{margin-left:26px}
.up2 + .in0{margin-left:4px}
.dn{display:inline-block;width:0;height:0;border-left:3.5px solid transparent;border-right:3.5px solid transparent;border-top:4px solid #888;margin-left:3px;vertical-align:-1px}
.excl{padding-left:8px !important}

/* audience */
.aud{display:flex;gap:14px;margin-left:3px;align-items:flex-start}
.aud-l{width:526px;flex:none}
.aud-box{border:1px solid #e2e2e2;border-top:2px solid #e8e8e8}
.aud-top{height:41px;background:#f6f6f6;display:flex;justify-content:space-between;align-items:center;padding:0 8px}
.rec{height:27px;width:133px;padding:0;background:#fff;border:1px solid #ddd;border-radius:3px;box-shadow:0 1px 0 #eee;font:11px "Lato",sans-serif;color:#555}
.mini-sel{width:110px;height:27px}
.mini-sel select{font-size:11px;padding:0 8px}
.aud-search,.li{display:flex;border-top:1px solid #eee}
.aud-search{height:44px}
.li{height:25.8px;align-items:stretch;font-size:12px;color:#666}
.lc{width:30px;flex:none;border-right:1px solid #e3e3e3;display:flex;align-items:center;padding-left:9px}
.nc{flex:1;margin-left:2px;border-left:1px solid #f0dcdc;padding-left:10px;display:flex;align-items:center;white-space:nowrap}
.tail{height:14px}
.tri{display:inline-block;width:0;height:0;border-top:3.5px solid transparent;border-bottom:3.5px solid transparent;border-left:4px solid #555;margin-right:3px}
.showsel{font-size:11.5px;color:#777;text-decoration:underline;margin-top:8px;width:136px;flex:none;margin-left:-4px}
.sbox{width:310px;height:28px;border:1px solid #ddd;border-radius:3px;box-shadow:0 1px 0 #eee;display:flex;align-items:center;padding:0 9px;font-size:11.5px;color:#a5a5a5}
.si-s{width:12px;height:13px;margin-right:5px;flex:none}
.ph{flex:1}
.si-x{width:11px;height:11px}
.aud-under{height:4px;margin:0 2px;border:1px solid #e4e4e4;border-top:0}
.aud-r{width:161px;flex:none;display:flex;flex-direction:column;gap:14px}
.reach{height:66px;border:2px solid #eee;text-align:center;padding-top:9px}
.rn{font-size:18px;line-height:24px;color:#333}
.rl{font-size:12px;line-height:16px;margin-top:6px;color:#2f9be0}
.selbox{height:398px;border:2px solid #eee;display:flex;flex-direction:column}
.sb-a{height:203px;padding:12px 0 0 13px}
.sb-b{flex:1;background:#f6f6f6;border-top:2px solid #eee;padding:12px 0 0 11px}
.k{font-size:12px;line-height:16px;color:#888;white-space:nowrap}
.v{font-size:13px;line-height:16px;color:#666}
.v.strong{color:#333;line-height:15px}
.v.tall{line-height:18px}
.adv{display:block;height:16px;line-height:16px;color:#1558f0;font-size:13px;white-space:nowrap}
.adv.b{font-size:12px;font-weight:500;margin-left:3px}
.alert{width:689px;height:27px;margin-left:3px;border:1px solid #e2e2e2;border-left:2px solid #2f8fd8;border-radius:2px;display:flex;align-items:center;font-size:12px;color:#666;padding-left:13px}
.warn{width:16px;height:16px;margin-right:6px}
.btns{display:flex;gap:8px;padding-left:164px}
.btn{height:26px;padding:0;background:#fff;border:1px solid #ddd;border-radius:3px;box-shadow:0 1px 0 #eee;font:500 12px "Lato",sans-serif;color:#333}
.b129{width:129px}.b101{width:101px}.b107{width:107px}
.goal{width:151px;height:43px;border:1px solid #ddd;border-left:5px solid #0b7aa3;border-radius:3px;display:flex;align-items:center;padding-left:10px;font-size:12.5px;font-weight:500;color:#333}
.upd{height:26px;width:256px;padding:0;margin-top:1px;background:#eee;border:0;border-radius:2px;font:11.5px "Lato",sans-serif;color:#b5b5b5}
.calc{width:329px;height:236px;border:1px solid #ddd;border-left:5px solid #0b7aa3;border-radius:3px;padding:0 10px}
.ct{font-size:12.5px;font-weight:500;color:#333;height:31px;line-height:36px}
.ctb{border-collapse:collapse;width:302px;table-layout:fixed;font-size:11px;color:#777;border:1px solid #e4e4e4}
.ctb th,.ctb td{height:25px;padding:0 8px;text-align:left;border-bottom:1px solid #e8e8e8;white-space:nowrap}
.ctb th:first-child,.ctb td:first-child{border-right:1px solid #f0e6e0;width:151px}
.ctb th{height:35px;padding-top:10px;font-size:12px;font-weight:500;color:#333}
.ctb .tr{text-align:right}
.ctb .hl td{background:#d3ebf9;color:#333;font-weight:500}
.w328{width:328px}.w329{width:329px}.h91{height:91px}.h44{height:44px}
.rst{margin-left:1px}
.rst .ta,.rst .checks{margin-left:0}
.checks{display:flex;flex-direction:column}
.chk{display:flex;align-items:center;height:21px;gap:8px;font-size:12px;white-space:nowrap}
.foot{display:flex;justify-content:flex-end;gap:7px}
.save{height:28px;width:43px;padding:0;background:#fff;border:1px solid #1558f0;border-radius:4px;font:500 12px "Lato",sans-serif;color:#1558f0}
.launch{height:28px;width:112px;padding:0;background:#0b46f0;border:0;border-radius:4px;font:500 12px "Lato",sans-serif;color:#fff}

/* vertical rhythm */
.m3{margin-top:3px}.m4{margin-top:4px}.m5{margin-top:5px}.m6{margin-top:6px}.m7{margin-top:7px}.m8{margin-top:8px}.m9{margin-top:9px}.m10{margin-top:10px}.m11{margin-top:11px}.m12{margin-top:12px}.m13{margin-top:13px}.m14{margin-top:14px}.m15{margin-top:15px}.m16{margin-top:16px}.m17{margin-top:17px}.m18{margin-top:18px}.m19{margin-top:19px}.m20{margin-top:20px}.m21{margin-top:21px}.m22{margin-top:22px}.m23{margin-top:23px}.m24{margin-top:24px}.m25{margin-top:25px}.m26{margin-top:26px}.m27{margin-top:27px}.m31{margin-top:31px}.m32{margin-top:32px}.m33{margin-top:33px}.m34{margin-top:34px}.m42{margin-top:42px}.m51{margin-top:51px}.m53{margin-top:53px}
```
